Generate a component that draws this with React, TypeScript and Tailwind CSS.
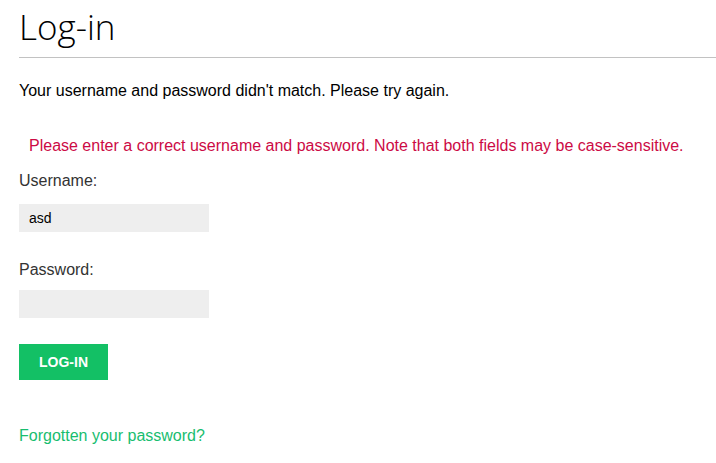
import React from "react";

const App = () => {
  return (
    <div className="min-h-screen bg-white pl-[19px] font-['Liberation_Sans',Arial,sans-serif] text-[16px]">
      <h1 className="pt-[6px] pb-[9px] border-b border-[#c2c2c2] text-[35px] leading-[42px] text-black font-['Open_Sans',sans-serif] font-light">
        Log-in
      </h1>
      <p className="mt-[23px] leading-[20px] text-black">
        Your username and password didn't match. Please try again.
      </p>
      <p className="mt-[35px] pl-[10px] leading-[20px] text-[#cc0a45]">
        Please enter a correct username and password. Note that both fields may be case-sensitive.
      </p>
      <form className="mt-[15px] flex flex-col">
        <label className="leading-[20px] text-[#333]">Username:</label>
        <input
          defaultValue="asd"
          className="mt-[13px] w-[190px] h-[28px] bg-[#eee] px-[10px] text-[14px] text-black outline-none"
        />
        <label className="mt-[28px] leading-[20px] text-[#333]">Password:</label>
        <input
          type="password"
          className="mt-[10px] w-[190px] h-[28px] bg-[#eee] px-[10px] text-[14px] outline-none"
        />
        <button
          type="button"
          className="mt-[26px] w-[89px] h-[36px] bg-[#13c065] text-white text-[14px] font-bold uppercase"
        >
          Log-in
        </button>
      </form>
      <a href="#" className="block mt-[46px] leading-[20px] text-[#18bd6f]">
        Forgotten your password?
      </a>
    </div>
  );
};

export default App;
